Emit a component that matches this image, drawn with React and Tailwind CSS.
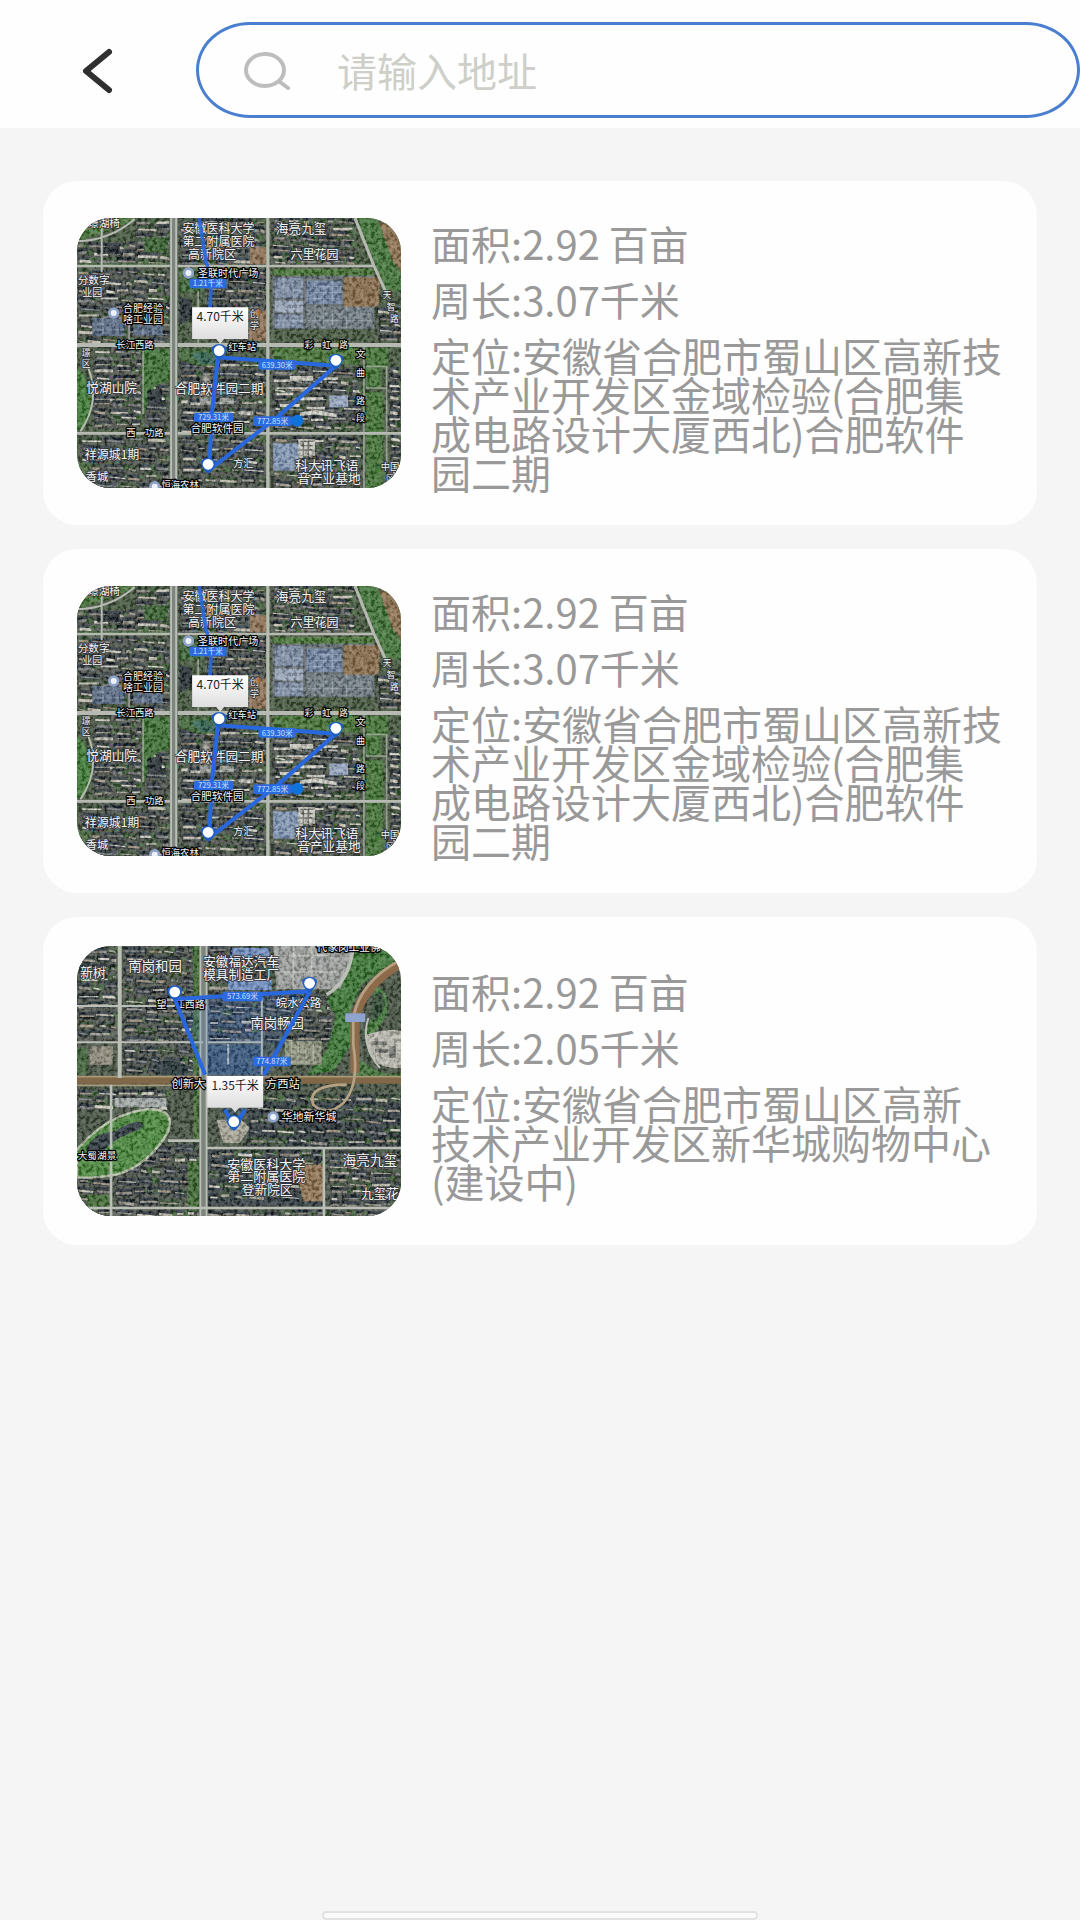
import React from 'react';

const FONT = '"Noto Sans CJK SC", sans-serif';

// small seeded generator so the blocks look the same on every render
const seeded = (seed) => {
  let s = seed;
  return () => {
    s = (s * 16807) % 2147483647;
    return s / 2147483647;
  };
};

const ROOFS = ['#a09b92', '#87827b', '#c2bcb0', '#74767a', '#9c8d7b', '#d6d2c8'];
const GAPS = ['#1a232d', '#141c24', '#222d36', '#2a4029'];

// rows of roofs with their shadows, filling one city block
const Block = ({ x, y, w, h, seed = 1, row = 20, base = '#424741' }) => {
  const rand = seeded(seed * 7919 + 13);
  const items = [];
  for (let ry = y + 3; ry < y + h - 8; ry += row) {
    let rx = x + 3 + rand() * 10;
    while (rx < x + w - 12) {
      const rw = Math.min(16 + rand() * 46, x + w - rx - 2);
      const dy = rand() * 8 - 2;
      const slant = rand() * 6 - 1;
      items.push(
        <g key={`${rx}-${ry}`}>
          <path d={`M${rx - 3} ${ry + dy - 5}l${rw + 4} ${slant}v${row * 0.7}l${-rw - 4} ${-slant}z`} fill={GAPS[Math.floor(rand() * 4)]} />
          <path d={`M${rx} ${ry + dy + 5}l${rw} ${slant}v${3 + rand() * 6}l${-rw} ${-slant}z`} fill={ROOFS[Math.floor(rand() * 6)]} />
        </g>
      );
      if (rand() > 0.5) {
        items.push(<circle key={`t${rx}-${ry}`} cx={rx + rw + 3} cy={ry + 8} r={4 + rand() * 6} fill="#35592e" />);
      }
      rx += rw + 5 + rand() * 14;
    }
  }
  return (
    <g>
      <rect x={x} y={y} width={w} height={h} fill={base} />
      {items}
    </g>
  );
};

const Label = ({ x, y, size = 32, dark, children }) => (
  <text
    x={x}
    y={y}
    fontSize={size}
    fontFamily={FONT}
    fill="#f6f6f4"
    stroke={dark ? '#050505' : '#30343a'}
    strokeWidth={dark ? 8 : 5}
    paintOrder="stroke"
    strokeLinejoin="round"
  >
    {children}
  </text>
);

const Distance = ({ x, y, w = 112, children }) => (
  <g>
    <rect x={x} y={y} width={w} height="29" rx="6" fill="#2b6be0" />
    <text x={x + w / 2} y={y + 23} fontSize="23" textAnchor="middle" fontFamily={FONT} fill="#cfe0ff">
      {children}
    </text>
  </g>
);

const Pin = ({ x, y }) => (
  <g>
    <path d={`M${x - 22} ${y - 10}Q${x} ${y - 30} ${x + 22} ${y - 10}Q${x + 24} ${y + 10} ${x} ${y + 28}Q${x - 24} ${y + 10} ${x - 22} ${y - 10}Z`} fill="#1f5fc4" />
    <circle cx={x} cy={y} r="16" fill="#fff" />
  </g>
);

const Poi = ({ x, y }) => (
  <g>
    <circle cx={x} cy={y} r="17" fill="#8fa2c8" />
    <circle cx={x} cy={y} r="9" fill="#eef2fb" />
  </g>
);

const Callout = ({ x, y, id, children }) => (
  <g>
    <path d={`M${x} ${y}h168v95h-72l-12 14l-12 -14h-72z`} fill={`url(#callout-${id})`} />
    <text x={x + 84} y={y + 42} fontSize="36" textAnchor="middle" fontFamily={FONT} fill="#222">
      {children}
    </text>
  </g>
);

const MapDefs = ({ id }) => (
  <defs>
    <linearGradient id={`callout-${id}`} x1="0" y1="0" x2="0" y2="1">
      <stop offset="0" stopColor="#fff" />
      <stop offset="1" stopColor="#d9d9d9" />
    </linearGradient>
    <filter id={`grain-${id}`} x="0" y="0" width="100%" height="100%">
      <feTurbulence type="fractalNoise" baseFrequency="0.09" numOctaves="3" seed="4" />
      <feColorMatrix type="matrix" values="2.6 0 0 0 -0.95  2.6 0 0 0 -0.93  2.6 0 0 0 -0.97  0 0 0 0 0.24" />
    </filter>
  </defs>
);

const SoftwareParkMap = ({ id }) => (
  <svg viewBox="52 52 971 810" preserveAspectRatio="none" className="block h-full w-full" role="img" aria-label="地图">
    <MapDefs id={id} />
    <rect x="52" y="52" width="971" height="810" fill="#3a4d34" />
    <Block x={52} y={125} w={280} h={70} seed={2} />
    <Block x={225} y={52} w={105} h={140} seed={3} />
    <Block x={52} y={205} w={280} h={130} seed={4} row={26} />
    <Block x={52} y={335} w={280} h={85} seed={5} row={24} />
    <Block x={100} y={440} w={145} h={245} seed={6} />
    <Block x={255} y={550} w={75} h={130} seed={7} row={30} />
    <Block x={60} y={705} w={268} h={157} seed={8} row={28} />
    <Block x={358} y={52} w={258} h={140} seed={9} row={24} />
    <Block x={440} y={205} w={178} h={215} seed={10} row={26} />
    <Block x={358} y={480} w={258} h={210} seed={11} row={28} />
    <Block x={358} y={705} w={258} h={157} seed={12} row={30} />
    <Block x={635} y={52} w={250} h={140} seed={13} row={17} />
    <Block x={635} y={500} w={270} h={185} seed={14} row={28} />
    <Block x={635} y={705} w={270} h={157} seed={15} row={26} />
    <Block x={985} y={500} w={38} h={190} seed={16} />
    <Block x={990} y={700} w={33} h={162} seed={17} />
    <Block x={950} y={320} w={73} h={100} seed={18} />

    {/* greenery */}
    <path d="M52 52H225V60L52 122Z" fill="#3f6e30" />
    <path d="M255 110h70v45h-70zM52 188h280v10H52z" fill="#2f5a27" />
    <path d="M250 445h80v95l-45 15l-35 90z" fill="#33682a" />
    <path d="M52 500Q130 590 62 690H52Z" fill="#33752a" />
    <path d="M358 205h70v70h-70zM358 445h110v50h-60l-50-20z" fill="#355e2e" />
    <path d="M390 462q40-18 80 6v22h-45z" fill="#265a47" />
    <path d="M640 442h260v48H640zM640 205h300v20H640z" fill="#3d6c2b" />
    <path d="M890 52h60l73 170v50h-45z" fill="#386f30" />
    <path d="M918 442h66v60h-20v60h-46zM918 575h50v287h-50z" fill="#376c2b" />
    <path d="M58 785h34v60H58z" fill="#3d6134" />
    <path d="M360 290l36 8v55l-38 20zM262 570l44-8v50l-40 4zM110 142l70-8v22l-66 6z" fill="#182028" />

    {/* bare ground */}
    <path d="M958 66h65v145l-24-28z" fill="#8b6a48" />
    <path d="M568 330h52v90h-52zM570 140h48v50h-48zM852 230h106v80l-20 12h-86z" fill="#8a6a4c" />

    {/* factory halls */}
    <g fill="#7686a4">
      <path d="M638 225h305v160H638z" fill="#59636b" />
      <rect x="645" y="232" width="84" height="60" />
      <rect x="645" y="300" width="84" height="36" fill="#97a4bc" />
      <rect x="645" y="342" width="84" height="40" />
      <rect x="740" y="240" width="104" height="70" fill="#687ca2" />
      <rect x="740" y="318" width="196" height="64" fill="#66727c" />
      <rect x="98" y="352" width="96" height="54" fill="#4d5f7e" />
      <rect x="220" y="364" width="88" height="40" fill="#4d5f7e" />
      <rect x="640" y="728" width="76" height="82" fill="#7d93b8" />
      <rect x="808" y="584" width="56" height="36" fill="#96a6c6" />
    </g>
    <path d="M852 230h106v80l-20 8h-86z" fill="#876644" />
    <g stroke="#aebbd0" strokeWidth="2" opacity="0.7">
      <path d="M645 250h84M645 268h84M645 318h84M645 360h84M740 258h104M740 276h104M740 294h104M740 340h196M740 360h196" />
      <path d="M670 232v150M700 232v150M765 240v142M790 240v142M818 240v142M860 318v64M895 318v64" />
      <path d="M98 370h96M98 388h96M130 352v54M160 352v54M250 364v40M280 364v40M640 748h76M640 768h76M640 788h76" />
    </g>
    <g fill="#d2d0c8">
      <path d="M690 526h70v14h-70zM775 530h60v8h-60zM650 576h50v8h-50zM720 590h70v9h-70zM660 610h60v9h-60zM740 618h55v8h-55zM650 560h130v5H650z" />
      <path d="M720 635l50-6v12l-50 5zM770 628l60 12v10l-60-8zM715 715h50v50h-50z" />
      <path d="M428 520h24v30h-24zM540 630h40v14h-40zM420 590h46v22h-46zM480 592h42v18h-42z" opacity="0.6" />
    </g>
    <path d="M722 722h36M722 735h36M722 748h36M730 720v44M745 720v44" stroke="#5c6060" strokeWidth="4" />
    <rect x="52" y="52" width="971" height="810" filter={`url(#grain-${id})`} />

    {/* roads */}
    <g fill="none" stroke="#b7bab2">
      <path d="M52 196H940M52 698H1023" strokeWidth="8" />
      <path d="M52 433H1023" strokeWidth="12" />
      <path d="M624 52V862" strokeWidth="10" />
      <path d="M126 52V215M52 122Q150 120 225 55" strokeWidth="6" />
      <path d="M250 440V640M415 270v160M912 440V862M980 497V790M918 497h60M918 562h60M208 340v90" strokeWidth="5" opacity="0.7" />
      <path d="M885 52L942 196L985 290" strokeWidth="9" />
      <path d="M85 500Q125 600 62 692" strokeWidth="6" />
    </g>
    <path d="M342 52V862" stroke="#7d857c" strokeWidth="24" />
    <path d="M334 52V862M349 52V862" stroke="#bfc2be" strokeWidth="5" />

    <Label x={85} y={80}>璟湖椅</Label>
    <Label x={368} y={98} size={36}>安徽医科大学</Label>
    <Label x={368} y={136} size={36}>第二附属医院</Label>
    <Label x={385} y={174} size={36}>高新院区</Label>
    <Label x={648} y={98} size={38}>海亮九玺</Label>
    <Label x={692} y={176} size={36}>六里花园</Label>
    <Label x={54} y={250} size={32}>分数字</Label>
    <Label x={68} y={287} size={30}>业园</Label>
    <Label x={190} y={335} size={30} dark>合肥经验</Label>
    <Label x={190} y={366} size={30} dark>啥工业园</Label>
    <Label x={170} y={442} size={28} dark>长江西路</Label>
    <Label x={66} y={465} size={26}>璟</Label>
    <Label x={66} y={500} size={26}>区</Label>
    <Label x={80} y={574} size={38}>悦湖山院</Label>
    <Label x={345} y={578} size={38}>合肥软件园二期</Label>
    <Label x={200} y={705} size={28} dark>西　功路</Label>
    <Label x={75} y={776} size={36}>祥源城1期</Label>
    <Label x={78} y={840} size={34}>香城</Label>
    <Label x={706} y={808} size={38}>科大讯飞语</Label>
    <Label x={712} y={848} size={38}>音产业基地</Label>
    <Label x={962} y={808} size={28}>中国</Label>
    <Label x={978} y={842} size={24}>区</Label>
    <Label x={734} y={441} size={26} dark>彩　虹　路</Label>
    <Label x={505} y={448} size={28} dark>红车站</Label>
    <Label x={570} y={350} size={28}>创</Label>
    <Label x={570} y={386} size={28}>学</Label>
    <Label x={888} y={470} size={27} dark>文</Label>
    <Label x={888} y={526} size={27} dark>曲</Label>
    <Label x={888} y={610} size={27} dark>路</Label>
    <Label x={888} y={660} size={27} dark>段</Label>
    <Label x={968} y={292} size={26}>天</Label>
    <Label x={980} y={328} size={26}>智</Label>
    <Label x={990} y={364} size={26}>路</Label>
    <Label x={305} y={862} size={28} dark>恒海农林</Label>
    <Label x={490} y={800} size={30}>　方汇</Label>

    {/* measured track */}
    <path d="M418 52L438 180L455 240L450 330" fill="none" stroke="#2867dd" strokeWidth="11" opacity="0.9" />
    <path d="M475 460L456 640L448 808L652 650L828 495L475 470" fill="none" stroke="#2867dd" strokeWidth="12" strokeLinejoin="round" />
    <Poi x={386} y={217} />
    <Label x={415} y={228} size={30} dark>圣联时代广场</Label>
    <Poi x={162} y={337} />
    <Poi x={285} y={858} />
    <Distance x={388} y={234}>1.21千米</Distance>
    <Distance x={596} y={478}>639.30米</Distance>
    <Distance x={402} y={636} w={118}>729.31米</Distance>
    <Distance x={580} y={647} w={116}>772.85米</Distance>
    <Label x={392} y={693} size={32} dark>合肥软件园</Label>
    <circle cx="712" cy="660" r="18" fill="#0f72dd" />
    <Pin x={445} y={791} />
    <Pin x={828} y={479} />
    <Pin x={478} y={450} />
    <Callout x={397} y={320} id={id}>4.70千米</Callout>
  </svg>
);

const XinhuaMap = ({ id }) => (
  <svg viewBox="52 44 971 810" preserveAspectRatio="none" className="block h-full w-full" role="img" aria-label="地图">
    <MapDefs id={id} />
    <rect x="52" y="44" width="971" height="810" fill="#3a4738" />
    <Block x={52} y={44} w={120} h={290} seed={21} row={28} />
    <Block x={190} y={44} w={212} h={385} seed={22} row={30} />
    <Block x={445} y={44} w={190} h={180} seed={23} row={28} />
    <Block x={445} y={230} w={155} h={105} seed={24} row={28} base="#3c5065" />
    <Block x={612} y={190} w={205} h={135} seed={25} row={30} />
    <Block x={52} y={475} w={272} h={60} seed={26} row={20} />
    <Block x={52} y={740} w={100} h={90} seed={27} row={26} />
    <Block x={165} y={640} w={250} h={190} seed={28} row={32} />
    <Block x={560} y={490} w={463} h={155} seed={29} row={32} base="#262f36" />
    <Block x={445} y={655} w={345} h={170} seed={30} row={32} base="#2b343b" />
    <Block x={805} y={655} w={218} h={170} seed={31} row={19} />
    <Block x={52} y={835} w={971} h={20} seed={32} row={18} />

    {/* greenery */}
    <path d="M880 44h143v30L905 160L865 250L880 330L820 420L740 430L800 360L830 250L800 210L860 130Z" fill="#30702a" />
    <path d="M935 165q60 0 45 90l-50 70l-18-20q50-80 23-140z" fill="#38732f" />
    <path d="M955 180q30 10 15 60l-30 35q-15-50 15-95z" fill="#24402a" />
    <path d="M895 380q70 60 128 45v30H885z" fill="#376a2e" />
    <path d="M400 44h30v385h-30zM402 475h22v155h-22zM385 690h32v150h-32zM85 790h65v40H85z" fill="#37632a" />
    <path d="M52 350h30v80H52z" fill="#335a2c" />
    <path d="M285 395q50-20 100 10v26H290z" fill="#1b2a30" />

    {/* factory roofs and yards */}
    <rect x="516" y="50" width="112" height="28" fill="#6c8bc7" />
    <rect x="505" y="146" width="130" height="30" fill="#6c8bc7" />
    <path d="M640 44h235v50l-35 80H650Z" fill="#9b9e9d" />
    <path d="M650 72h160M665 122h165M700 44v120M755 44v130" stroke="#c3c5c2" strokeWidth="5" />
    <path d="M442 340h160v90H442z" fill="#2e4965" />
    <path d="M505 338v62" stroke="#c9d1cc" strokeWidth="6" />
    <path d="M675 330h110v70H675z" fill="#8b8f7a" />
    <path d="M695 335v60M715 335v60M738 335v60M760 335v60" stroke="#b0b29c" strokeWidth="4" />
    <path d="M918 310q60-20 105-12v112q-75 5-98-50z" fill="#bdbab2" />
    <path d="M935 330h45v12h-45zM945 352h40v12h-40zM988 345h20v35h-20z" fill="#6f716d" />
    <path d="M470 565h75l25 25l-30 45h-50z" fill="#aaa698" />
    <path d="M705 700h85v110h-60z" fill="#8e6d4c" />
    <path d="M165 500h155v28H165z" fill="#a3aaa9" />
    <path d="M90 345h70v55H90z" fill="#8c8778" />

    {/* park with its lake */}
    <path d="M52 655Q140 550 260 534Q350 530 325 600Q270 700 170 730Q100 742 52 738Z" fill="#3f8332" stroke="#b8c2a8" strokeWidth="7" />
    <path d="M80 655Q100 605 165 600Q215 568 245 572Q262 590 210 606Q160 625 130 660Z" fill="#222d37" />
    <rect x="52" y="44" width="971" height="810" filter={`url(#grain-${id})`} />

    {/* roads */}
    <path d="M52 446H1023" stroke="#7f6747" strokeWidth="22" />
    <path d="M52 436H1023M52 462H450" stroke="#a89977" strokeWidth="5" />
    <path d="M431 44V854" stroke="#7c857c" strokeWidth="26" />
    <g fill="none" stroke="#bcbfb7">
      <path d="M422 44V854M440 44V854" strokeWidth="5" />
      <path d="M180 44V440" strokeWidth="12" />
      <path d="M52 224H430M52 333H430M445 333H610M606 200V430" strokeWidth="6" />
      <path d="M154 460V854M325 628h95M440 650H1023M792 650V854M52 830H1023" strokeWidth="8" />
      <path d="M880 44Q870 150 800 190" strokeWidth="10" />
      <path d="M925 260Q900 340 960 410" strokeWidth="6" />
    </g>
    <path d="M1023 95Q910 160 885 260Q885 340 885 425" fill="none" stroke="#8d6b4a" strokeWidth="28" />
    <path d="M1023 85Q900 150 880 260V340Q900 460 850 515Q800 560 760 520Q740 460 860 460" fill="none" stroke="#b5a284" strokeWidth="8" />
    <rect x="856" y="246" width="60" height="26" fill="#8fa4cc" />
    <path d="M345 205L750 178L630 430L525 585L442 430Z" fill="#2f6fe0" opacity="0.14" />

    <Label x={62} y={136} size={38}>新树</Label>
    <Label x={206} y={120} size={40}>南岗和园</Label>
    <Label x={430} y={105} size={38}>安徽福达汽车</Label>
    <Label x={430} y={142} size={38}>模具制造工厂</Label>
    <Label x={770} y={60} size={32} dark>代家岗工业佛</Label>
    <Label x={290} y={230} size={30} dark>望</Label>
    <Label x={345} y={230} size={30} dark>江西路</Label>
    <Label x={648} y={228} size={34}>皖水公路</Label>
    <Label x={572} y={290} size={40}>南岗畅园</Label>
    <Label x={335} y={471} size={34} dark>创新大</Label>
    <Label x={618} y={471} size={34} dark>方西站</Label>
    <Label x={665} y={570} size={33} dark>华地新华城</Label>
    <Label x={54} y={684} size={29} dark>大蜀湖景</Label>
    <Label x={502} y={712} size={39}>安徽医科大学</Label>
    <Label x={502} y={750} size={39}>第二附属医院</Label>
    <Label x={508} y={787} size={38}>　登新院区</Label>
    <Label x={848} y={700} size={41}>海亮九玺</Label>
    <Label x={903} y={800} size={38}>九玺花</Label>

    {/* measured track */}
    <path d="M345 203L750 180L612 430M345 203L436 430M495 535L525 590L555 535" fill="none" stroke="#2867dd" strokeWidth="12" strokeLinejoin="round" />
    <Distance x={488} y={181} w={120}>573.69米</Distance>
    <Distance x={580} y={376}>774.87米</Distance>
    <Poi x={640} y={557} />
    <Pin x={345} y={182} />
    <Pin x={749} y={156} />
    <Pin x={522} y={571} />
    <Callout x={442} y={434} id={id}>1.35千米</Callout>
  </svg>
);

const plots = [
  {
    id: 'a',
    Map: SoftwareParkMap,
    area: '2.92 百亩',
    perimeter: '3.07千米',
    address: '安徽省合肥市蜀山区高新技术产业开发区金域检验(合肥集成电路设计大厦西北)合肥软件园二期',
  },
  {
    id: 'b',
    Map: SoftwareParkMap,
    area: '2.92 百亩',
    perimeter: '3.07千米',
    address: '安徽省合肥市蜀山区高新技术产业开发区金域检验(合肥集成电路设计大厦西北)合肥软件园二期',
  },
  {
    id: 'c',
    Map: XinhuaMap,
    area: '2.92 百亩',
    perimeter: '2.05千米',
    address: '安徽省合肥市蜀山区高新\n技术产业开发区新华城购物中心(建设中)',
  },
];

const PlotCard = ({ plot }) => {
  const { Map, id, area, perimeter, address } = plot;
  return (
    <li className="flex items-center gap-[30px] rounded-[34px] bg-[#fefefe] px-[34px] py-[29px]">
      <div className="h-[270px] w-[324px] shrink-0 overflow-hidden rounded-[34px]">
        <Map id={id} />
      </div>
      <div className="flex min-w-0 flex-1 flex-col gap-[17px] pt-[14px] pb-1 text-[40px] leading-[39px] text-[#999999]">
        <p>面积:{area}</p>
        <p>周长:{perimeter}</p>
        <p className="whitespace-pre-line">定位:{address}</p>
      </div>
    </li>
  );
};

const App = () => {
  return (
    <div className="flex min-h-screen flex-col bg-[#f5f5f5] font-['Noto_Sans_CJK_SC',sans-serif]">
      <header className="flex h-32 items-center bg-[#fefefe] pt-3">
        <button type="button" aria-label="返回" className="flex h-24 w-[196px] shrink-0 items-center pl-20">
          <svg width="36" height="48" viewBox="0 0 36 48" fill="none" stroke="#303030" strokeWidth="6" strokeLinecap="round" strokeLinejoin="round">
            <path d="M29 6L6 25L29 44" />
          </svg>
        </button>
        <label className="flex h-24 min-w-0 flex-1 items-center rounded-[54px/48px] border-[3px] border-[#4a7fd0] pl-[45px]">
          <svg className="shrink-0" width="48" height="40" viewBox="0 0 48 40" fill="none" stroke="#bdbdbd" strokeWidth="4" strokeLinecap="round">
            <ellipse cx="21" cy="20" rx="19" ry="16" />
            <path d="M36 32L44 38" />
          </svg>
          <input
            type="text"
            aria-label="请输入地址"
            placeholder="请输入地址"
            className="ml-[45px] h-16 min-w-0 flex-1 bg-transparent text-[40px] text-[#333333] outline-none placeholder:text-[#cdcfc8]"
          />
        </label>
      </header>
      <main className="flex-1 px-[43px] pt-[53px]">
        <ul className="flex flex-col gap-6">
          {plots.map((plot) => (
            <PlotCard key={plot.id} plot={plot} />
          ))}
        </ul>
      </main>
      <div className="mx-auto h-[9px] w-[436px] rounded-full border-2 border-[#e2e2e2] bg-[#fafafa]" />
    </div>
  );
};

export default App;
